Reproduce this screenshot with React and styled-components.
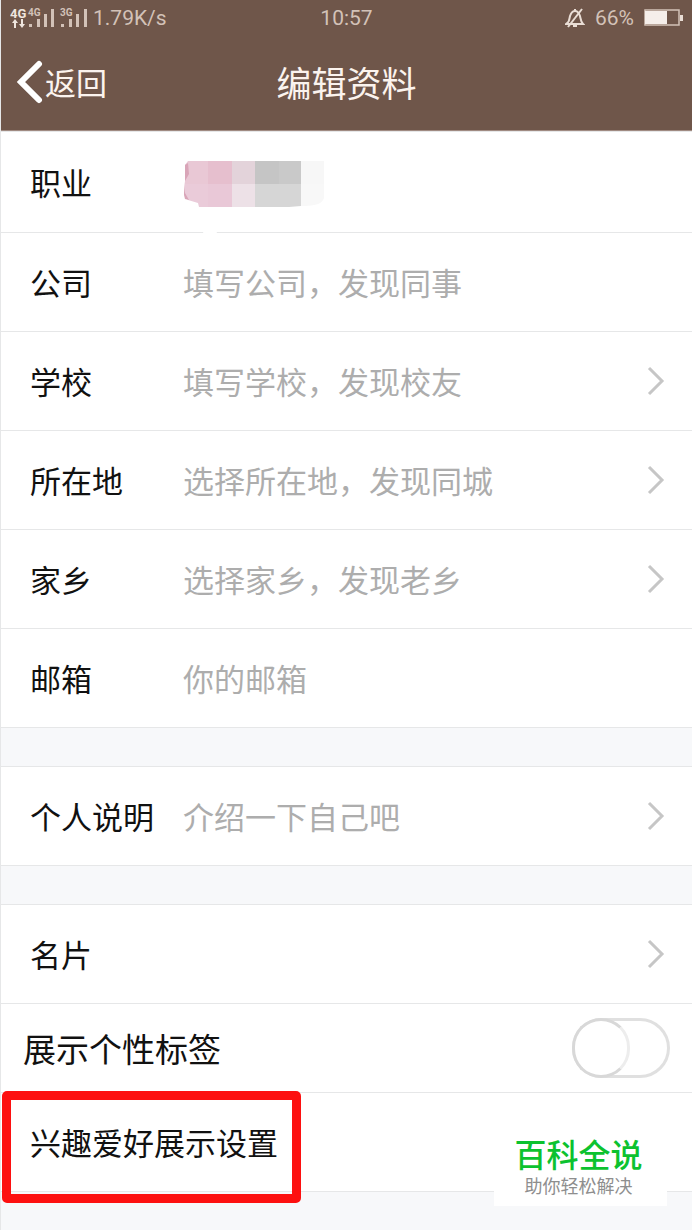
import React, { useState } from "react";
import styled, { createGlobalStyle } from "styled-components";

const Colors = {
  header: "#6f564a",
  headerEdge: "#a08b82",
  status: "#d3c2b8",
  title: "#fbf3ee",
  text: "#111",
  hint: "#adadad",
  line: "#e6e7e8",
  chevron: "#c6c6c6",
  background: "#f7f8fa",
  mark: "#fd1010",
  brand: "#0cc22f"
};

const GlobalStyle = createGlobalStyle`
  *, *::before { box-sizing: border-box; }

  body {
    margin: 0;
    background: ${Colors.background};
    color: ${Colors.text};
    font-family: "Noto Sans CJK SC", sans-serif;
  }

  button, input {
    font-family: inherit;
    color: inherit;
  }
`;

const Page = styled.div`
  min-height: 100vh;
  border-left: 1px solid ${Colors.line};
  overflow-x: hidden;
`;

const Header = styled.header`
  background: ${Colors.header};
  border-bottom: 1px solid ${Colors.headerEdge};
`;

const StatusBar = styled.div`
  display: grid;
  grid-template-columns: 1fr auto 1fr;
  align-items: center;
  height: 36px;
  padding: 0 9px;
  color: ${Colors.status};
  font-family: Roboto, sans-serif;
  font-size: 21px;
  line-height: 24px;
`;

const StatusGroup = styled.div`
  display: flex;
  align-items: center;
  justify-content: ${(p) => (p.$end ? "flex-end" : "flex-start")};
  gap: ${(p) => (p.$end ? "10px" : "5px")};
`;

const NavBar = styled.nav`
  display: grid;
  grid-template-columns: 1fr auto 1fr;
  align-items: center;
  height: 94px;
  padding: 0 15px 3px;
  color: ${Colors.title};
`;

const BackButton = styled.button`
  display: flex;
  align-items: center;
  justify-self: start;
  gap: 2px;
  padding: 0;
  border: 0;
  background: none;
  font-size: 31px;
  line-height: 44px;
`;

const Title = styled.h1`
  margin: 0;
  font-size: 35px;
  font-weight: 400;
  line-height: 48px;
`;

const Group = styled.section`
  background: #fff;
  border-top: 1px solid ${Colors.line};

  & + & {
    margin-top: 38px;
  }
`;

const Row = styled.div`
  position: relative;
  display: flex;
  align-items: center;
  width: 100%;
  height: ${(p) => p.$height || "99px"};
  padding: 0 ${(p) => (p.$wide ? "22px" : "27px")} 0 ${(p) => (p.$wide ? "22px" : "29px")};
  border: 0;
  border-bottom: 1px solid ${Colors.line};
  background: #fff;
  font-size: ${(p) => (p.$wide ? "33px" : "31px")};
  line-height: 44px;
  text-align: left;
`;

const Label = styled.label`
  flex: ${(p) => (p.$grow ? "1" : "0 0 153px")};
  white-space: nowrap;
`;

const Hint = styled.span`
  flex: 1;
  color: ${Colors.hint};
`;

const TextInput = styled.input`
  flex: 1;
  min-width: 0;
  padding: 0;
  border: 0;
  outline: 0;
  background: none;
  font-size: 31px;
  line-height: 44px;

  &::placeholder {
    color: ${Colors.hint};
    opacity: 1;
  }
`;

const Switch = styled.input`
  appearance: none;
  width: 98px;
  height: 60px;
  margin: 0;
  border: 3px solid #e0e0e0;
  border-radius: 30px;
  background: #fff;

  &::before {
    content: "";
    display: block;
    width: 58px;
    height: 60px;
    margin: -3px;
    border: 3px solid #d8d8d8;
    border-right-color: #ededed;
    border-radius: 30px;
    background: #fff;
  }

  &:checked {
    background: ${Colors.brand};
  }

  &:checked::before {
    margin-left: 37px;
  }
`;

const Marker = styled.div`
  position: absolute;
  z-index: 1;
  top: -2px;
  left: 1px;
  width: 299px;
  height: 112px;
  border: 9px solid ${Colors.mark};
  border-radius: 5px;
  pointer-events: none;
`;

const Watermark = styled.div`
  position: absolute;
  top: 40px;
  right: 25px;
  width: 173px;
  padding: 1px 4px 8px 0;
  background: #fff;
  text-align: center;
`;

const Brand = styled.div`
  color: ${Colors.brand};
  font-size: 32px;
  font-weight: 500;
  line-height: 38px;
`;

const Slogan = styled.div`
  color: #8e8e8e;
  font-size: 18px;
  line-height: 26px;
`;

function Signal() {
  return (
    <svg width="78" height="22" viewBox="0 0 78 22" fill={Colors.status} fontFamily="Roboto, sans-serif" fontWeight="700">
      <g fill="#efe5de">
        <text x="0" y="11" fontSize="13">4G</text>
        <path d="M5 12l3 4H6v5H4v-5H2zM12 21l-3-4h2v-5h2v5h2z" />
      </g>
      <text x="18" y="9" fontSize="10">4G</text>
      <path d="M19 17h3v3h-3zM27 12h3v8h-3zM34 7h3v13h-3zM41 2h3v18h-3z" />
      <text x="50" y="9" fontSize="10">3G</text>
      <path d="M51 17h3v3h-3zM59 12h3v8h-3zM66 7h3v13h-3zM74 2h3v18h-3z" />
    </svg>
  );
}

function BellOff() {
  return (
    <svg width="20" height="20" viewBox="0 0 20 20" fill="none" stroke="#e9ddd5" strokeWidth="2">
      <path d="M1 16h17c-2-2-2-3-3-8-1-3-2-5-5-5S6 5 5 8c-1 5-1 6-4 8zM10 1v2M8 18h4" />
      <path d="M17 1L3 19" />
    </svg>
  );
}

function Battery() {
  return (
    <svg width="39" height="18" viewBox="0 0 39 18">
      <path d="M1 1h34v15H1z" fill="none" stroke={Colors.status} strokeWidth="1.5" />
      <path d="M1 2h22v13H1z" fill="#f5eeea" />
      <path d="M36 6h3v6h-3z" fill="#e9ddd5" />
    </svg>
  );
}

function BackArrow() {
  return (
    <svg width="27" height="44" viewBox="0 0 27 44" fill="none" stroke="#fff" strokeWidth="6" strokeLinecap="round" strokeLinejoin="miter">
      <path d="M23 4L5 22l18 18" />
    </svg>
  );
}

function Chevron() {
  return (
    <svg width="18" height="30" viewBox="0 0 18 30" fill="none" stroke={Colors.chevron} strokeWidth="3">
      <path d="M2 2l13 13L2 28" />
    </svg>
  );
}

function Mosaic() {
  return (
    <svg width="142" height="52" viewBox="0 -4 142 52" overflow="visible">
      <path d="M5 1h20v23H2V5z" fill="#e9c8d5" />
      <path d="M25 1h24v23H25z" fill="#e6bfce" />
      <path d="M49 1h23v23H49z" fill="#e3d3da" />
      <path d="M72 1h24v23H72z" fill="#c5c5c5" />
      <path d="M96 1h22v23H96z" fill="#c9c9c9" />
      <path d="M118 1h23v23h-23z" fill="#f7f7f7" />
      <path d="M2 24h23v23h-9l-1-4-10-3-3-4z" fill="#eacbd9" />
      <path d="M25 24h24v23H25z" fill="#e9c8d7" />
      <path d="M49 24h23v23H49z" fill="#ede1e7" />
      <path d="M72 24h46v22l-12 1H72z" fill="#d6d6d6" />
      <path d="M118 24h23v14c-2 6-8 8-23 8z" fill="#f8f8f8" />
      <path d="M2 5l3-2 1 11-4 7zM1 21l1 12 4 7-4-1-1-4z" fill="#d9a5b8" />
      <ellipse cx="27" cy="72" rx="7" ry="3" fill="#fff" />
    </svg>
  );
}

function InputRow({ id, label, placeholder, type = "text" }) {
  return (
    <Row>
      <Label htmlFor={id}>{label}</Label>
      <TextInput id={id} type={type} placeholder={placeholder} />
    </Row>
  );
}

function LinkRow({ label, hint }) {
  return (
    <Row as="button" type="button">
      <Label as="span">{label}</Label>
      <Hint>{hint}</Hint>
      <Chevron />
    </Row>
  );
}

export default function App() {
  const [showTags, setShowTags] = useState(false);

  return (
    <>
      <GlobalStyle />
      <Page>
        <Header>
          <StatusBar>
            <StatusGroup>
              <Signal />
              <span>1.79K/s</span>
            </StatusGroup>
            <span>10:57</span>
            <StatusGroup $end>
              <BellOff />
              <span>66%</span>
              <Battery />
            </StatusGroup>
          </StatusBar>
          <NavBar>
            <BackButton type="button">
              <BackArrow />
              返回
            </BackButton>
            <Title>编辑资料</Title>
          </NavBar>
        </Header>

        <main>
          <Group>
            <Row $height="101px">
              <Label as="span">职业</Label>
              <Mosaic />
            </Row>
            <InputRow id="company" label="公司" placeholder="填写公司，发现同事" />
            <LinkRow label="学校" hint="填写学校，发现校友" />
            <LinkRow label="所在地" hint="选择所在地，发现同城" />
            <LinkRow label="家乡" hint="选择家乡，发现老乡" />
            <InputRow id="email" type="email" label="邮箱" placeholder="你的邮箱" />
          </Group>

          <Group>
            <LinkRow label="个人说明" hint="介绍一下自己吧" />
          </Group>

          <Group>
            <LinkRow label="名片" />
            <Row $height="89px" $wide>
              <Label $grow htmlFor="tags">展示个性标签</Label>
              <Switch
                id="tags"
                type="checkbox"
                role="switch"
                checked={showTags}
                onChange={(e) => setShowTags(e.target.checked)}
              />
            </Row>
            <Row>
              <Label as="span" $grow>兴趣爱好展示设置</Label>
              <Marker />
              <Watermark>
                <Brand>百科全说</Brand>
                <Slogan>助你轻松解决</Slogan>
              </Watermark>
            </Row>
          </Group>
        </main>
      </Page>
    </>
  );
}
